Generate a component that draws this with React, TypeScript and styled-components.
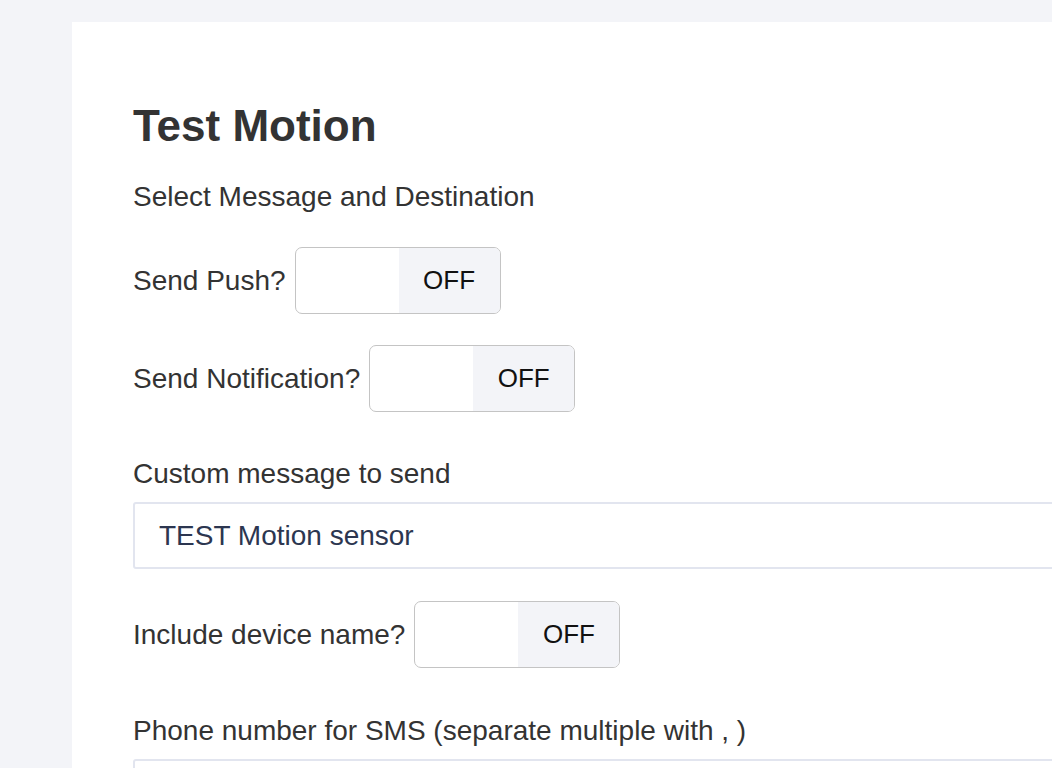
import React from "react";
import styled, { createGlobalStyle } from "styled-components";

const Global = createGlobalStyle`
  html, body { margin: 0; padding: 0; background: #f3f4f8; }
  body { font-family: "Liberation Sans", Arial, Helvetica, sans-serif; color: #333; overflow: hidden; }
  * { box-sizing: border-box; }
`;

const Page = styled.div`
  padding: 22px 0 0 72px;
  height: 768px;
  overflow: hidden;
`;

const Card = styled.div`
  background: #fff;
  padding: 80px 0 0 61px;
  height: 746px;
  width: 980px;
  overflow: hidden;
`;

const Title = styled.h1`
  margin: 0;
  font-size: 44px;
  line-height: 48px;
  font-weight: bold;
  color: #333;
`;

const Label = styled.div<{ $mt?: number }>`
  margin-top: ${(p) => p.$mt ?? 0}px;
  font-size: 28px;
  line-height: 32px;
  color: #333;
  white-space: nowrap;
`;

const Row = styled.div<{ $mt: number }>`
  margin-top: ${(p) => p.$mt}px;
  display: flex;
  align-items: center;
  gap: 9px;
`;

const Toggle = styled.div`
  display: flex;
  width: 206px;
  height: 67px;
  border: 1.5px solid #c4c4c4;
  border-radius: 7px;
  overflow: hidden;
  background: #fff;
`;

const Knob = styled.div`
  width: 103px;
  flex: none;
`;

const State = styled.div`
  flex: 1;
  background: #f3f4f8;
  display: flex;
  align-items: center;
  justify-content: center;
  font-size: 26px;
  color: #111;
`;

const Input = styled.div<{ $mt: number }>`
  margin-top: ${(p) => p.$mt}px;
  width: 1000px;
  height: 67px;
  border: 2px solid #e2e5ef;
  border-radius: 3px;
  padding-left: 24px;
  display: flex;
  align-items: center;
  font-size: 28px;
  color: #2c3650;
`;

const Switch = ({ label, mt }: { label: string; mt: number }) => (
  <Row $mt={mt}>
    <Label>{label}</Label>
    <Toggle>
      <Knob />
      <State>OFF</State>
    </Toggle>
  </Row>
);

export default function App() {
  return (
    <>
      <Global />
      <Page>
        <Card>
          <Title>Test Motion</Title>
          <Label $mt={31}>Select Message and Destination</Label>
          <Switch label="Send Push?" mt={34} />
          <Switch label="Send Notification?" mt={31} />
          <Label $mt={46}>Custom message to send</Label>
          <Input $mt={12}>TEST Motion sensor</Input>
          <Switch label="Include device name?" mt={32} />
          <Label $mt={47}>Phone number for SMS (separate multiple with , )</Label>
          <Input $mt={12} />
        </Card>
      </Page>
    </>
  );
}
